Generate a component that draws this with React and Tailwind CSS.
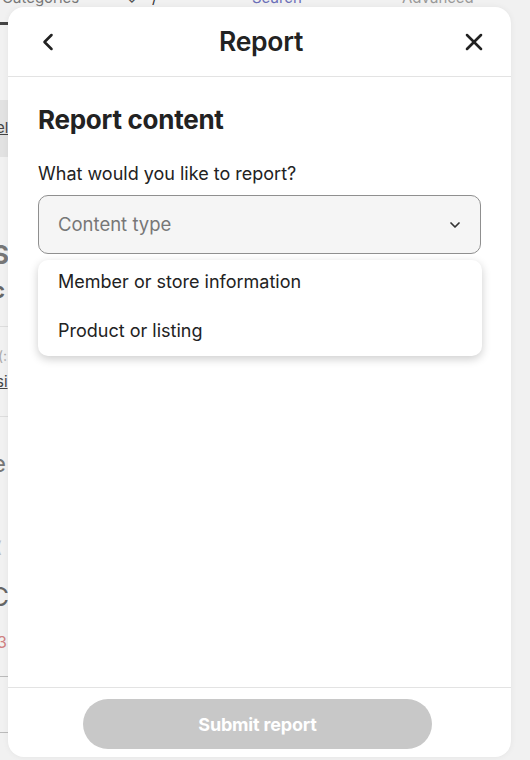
import React from 'react';
import { FiChevronLeft, FiX, FiChevronDown } from 'react-icons/fi';

const font = { fontFamily: 'Inter, "Noto Sans", sans-serif' };

// slivers of the page that sits behind the modal, as one column of rows
const strip = [
  { h: 'h-[100px]', el: <div className="mt-[22px] w-[10px] h-[3px] bg-[#444]" /> },
  { h: 'h-[57px]', el: <div className="h-full bg-[#e2e2e2] flex items-center -ml-[4px] text-[15px] underline text-[#444]">el</div> },
  { h: 'h-[80px]', el: null },
  { h: 'h-[38px]', el: <div className="-ml-[8px] text-[26px] font-bold text-[#777] leading-[36px]">S</div> },
  { h: 'h-[52px]', el: <div className="-ml-[8px] text-[22px] font-bold text-[#666] leading-[30px] border-b border-[#ddd] pb-[21px]">c</div> },
  { h: 'h-[18px]', el: null },
  { h: 'h-[26px]', el: <div className="-ml-[2px] text-[14px] text-[#aaa] leading-[22px]">(:</div> },
  { h: 'h-[46px]', el: <div className="-ml-[4px] text-[15px] underline text-[#444] leading-[22px] border-b border-[#ddd] pb-[23px]">si</div> },
  { h: 'h-[32px]', el: null },
  { h: 'h-[87px]', el: <div className="-ml-[8px] text-[24px] text-[#777] leading-[30px]">e</div> },
  { h: 'h-[46px]', el: <div className="-ml-[4px] text-[16px] text-[#bbb] leading-[22px]">(</div> },
  { h: 'h-[49px]', el: <div className="-ml-[10px] text-[26px] text-[#666] leading-[30px]">C</div> },
  { h: 'h-[45px]', el: <div className="-ml-[3px] text-[16px] text-[#d08080] leading-[22px]">3</div> },
  { h: 'h-[60px]', el: <div className="w-[10px] h-[57px] border-t border-b border-[#bbb]" /> },
];

function Backdrop() {
  return (
    <div className="absolute inset-0 bg-[#f1f1f1] overflow-hidden text-[#555] flex flex-col">
      <div className="flex items-start h-[10px] text-[15px] leading-none -mt-[10px] shrink-0">
        <span className="ml-[2px] w-[124px] text-[#777]">Categories</span>
        <span className="w-[26px] text-[#555]">⌄</span>
        <span className="w-[20px] text-[#333]">/</span>
        <span className="w-[80px] border-l border-[#aaa] h-[10px]" />
        <span className="w-[150px] text-[#6b6fb8]">Search</span>
        <span className="text-[#999]">Advanced</span>
      </div>
      <div className="flex flex-col w-[10px]">
        {strip.map((row, i) => (
          <div key={i} className={`${row.h} shrink-0`}>{row.el}</div>
        ))}
      </div>
    </div>
  );
}

export default function App() {
  return (
    <div className="relative w-[530px] h-[760px] overflow-hidden bg-[#f4f4f4]" style={font}>
      <Backdrop />
      <div className="absolute left-[8px] top-[7px] w-[503px] h-[750px] bg-white rounded-[16px] flex flex-col shadow-[0_0_6px_rgba(0,0,0,0.06)]">
        <header className="h-[70px] border-b border-[#e3e3e3] flex items-center justify-between pl-[26px] pr-[23px] shrink-0">
          <FiChevronLeft className="w-[28px] h-[28px] text-[#222]" strokeWidth={2.2} />
          <h1 className="text-[26.5px] font-semibold text-[#222] tracking-[-0.01em]">Report</h1>
          <FiX className="w-[28px] h-[28px] text-[#222]" strokeWidth={2.2} />
        </header>

        <main className="flex-1 px-[30px] pt-[28px]">
          <h2 className="text-[26px] font-bold text-[#222] leading-[30px] tracking-[-0.01em]">Report content</h2>
          <p className="mt-[29px] text-[18px] text-[#222] leading-[20px]">What would you like to report?</p>
          <div className="relative mt-[11px]">
            <div className="h-[59px] rounded-[10px] border border-[#8f8f8f] bg-[#f5f5f5] flex items-center justify-between pl-[19px] pr-[17px]">
              <span className="text-[18.5px] text-[#777]">Content type</span>
              <FiChevronDown className="w-[16px] h-[16px] text-[#333]" strokeWidth={2.6} />
            </div>
            <ul className="absolute left-0 right-[-1px] top-[65px] bg-white rounded-[10px] shadow-[0_3px_10px_rgba(0,0,0,0.2)]">
              <li className="h-[49px] pl-[20px] pt-[11px] text-[18px] leading-[22px] text-[#222]">Member or store information</li>
              <li className="h-[47px] pl-[20px] pt-[11px] text-[18px] leading-[22px] text-[#222]">Product or listing</li>
            </ul>
          </div>
        </main>

        <footer className="h-[70px] border-t border-[#e3e3e3] flex justify-center pt-[11px] pr-[4px] shrink-0">
          <button className="w-[349px] h-[50px] rounded-full bg-[#c8c8c8] text-white text-[18px] font-bold tracking-[-0.01em]">
            Submit report
          </button>
        </footer>
      </div>
    </div>
  );
}
